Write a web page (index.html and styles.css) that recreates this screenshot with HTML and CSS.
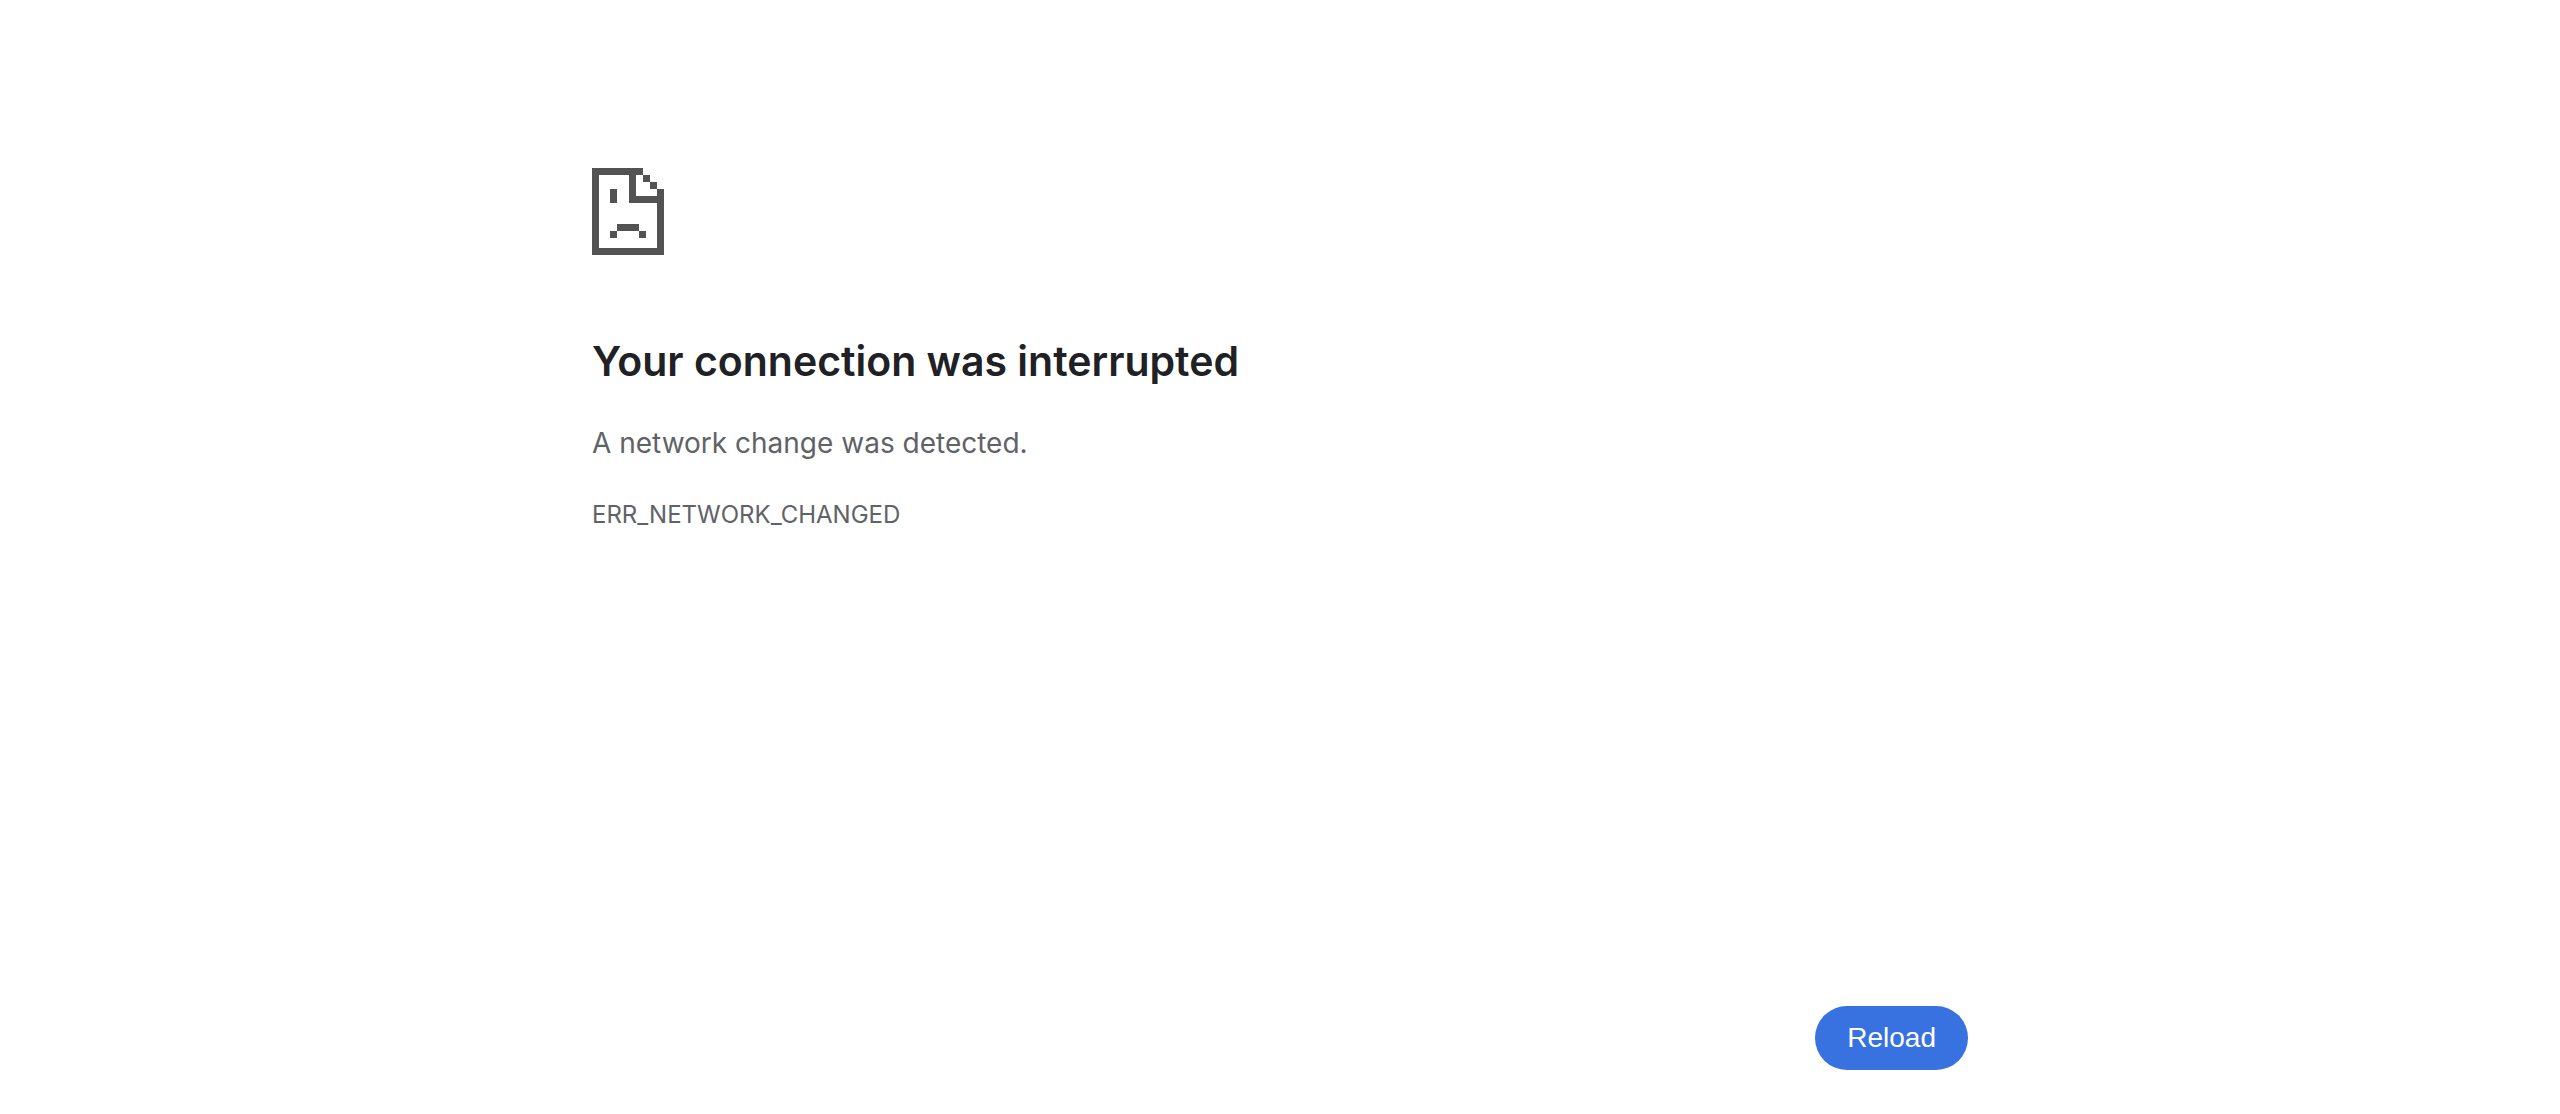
FILE: index.html
```html
<!DOCTYPE html>
<html lang="en">
<head>
<meta charset="utf-8">
<meta name="viewport" content="width=device-width, initial-scale=1">
<title>Your connection was interrupted</title>
<link rel="stylesheet" href="styles.css">
</head>
<body>
<main class="error-page">
  <svg class="error-icon" viewBox="0 0 72 87" width="72" height="87" shape-rendering="crispEdges" aria-hidden="true">
    <path d="M0 0H51V7H58V14H65V21H72V87H0ZM7 7V80H65V35H37V7ZM44 7V28H65V21H58V14H51V7ZM18 21H25V35H18ZM25 56H47V63H54V70H47V63H25V70H18V63H25Z" fill-rule="evenodd"/>
  </svg>
  <h1 class="error-title">Your connection was interrupted</h1>
  <p class="error-summary">A network change was detected.</p>
  <p class="error-code">ERR_NETWORK_CHANGED</p>
  <div class="actions">
    <button class="reload-button" type="button">Reload</button>
  </div>
</main>
</body>
</html>
```

FILE: styles.css
```css
body {
  margin: 0;
  background: #fff;
  color: #5f6368;
  font-family: Inter, "Liberation Sans", sans-serif;
}

.error-page {
  box-sizing: border-box;
  max-width: 1376px;
  margin: 0 auto;
  padding: 168px 0 44px;
}

.error-icon {
  display: block;
  fill: #535353;
}

.error-title {
  margin: 78px 0 0;
  color: #202124;
  font-size: 41px;
  font-weight: 600;
  line-height: 56px;
}

.error-summary {
  margin: 32px 0 0;
  font-size: 28px;
  line-height: 44px;
}

.error-code {
  margin: 32px 0 0;
  font-size: 24px;
  line-height: 36px;
}

.actions {
  display: flex;
  justify-content: flex-end;
  margin-top: 473px;
}

.reload-button {
  height: 64px;
  padding: 0 32px;
  border: 0;
  border-radius: 32px;
  background: #3871e0;
  color: #fff;
  font-family: "Liberation Sans", Arial, sans-serif;
  font-size: 28px;
  line-height: 32px;
  cursor: pointer;
}
```
